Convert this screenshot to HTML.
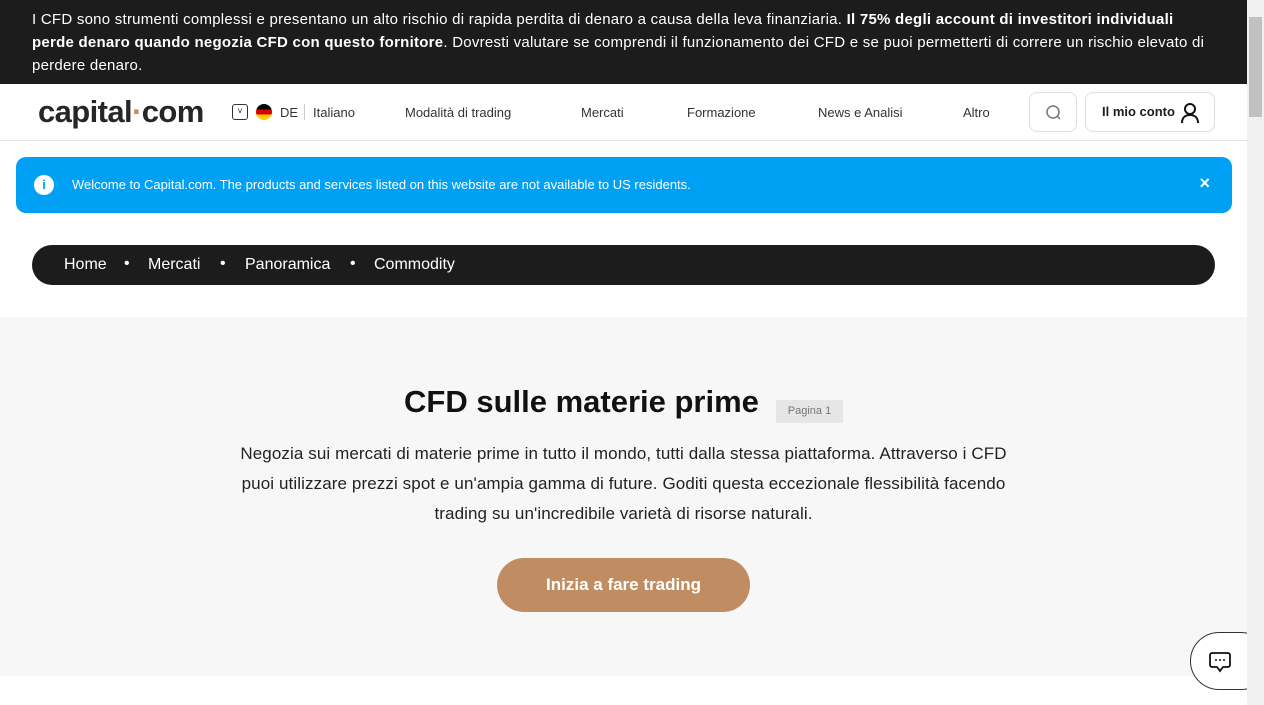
<!DOCTYPE html>
<html><head><meta charset="utf-8"><style>
*{margin:0;padding:0;box-sizing:border-box}
body{width:1264px;height:705px;overflow:hidden;font-family:"Liberation Sans",sans-serif;background:#fff;position:relative;color:#1d1d1d}
.top{position:absolute;left:0;top:0;width:1247px;height:84px;background:#1c1c1c;color:#fff;font-size:15px;line-height:23px;padding:8px 32px 0;letter-spacing:0.25px}
.hdr{position:absolute;left:0;top:84px;width:1247px;height:57px;border-bottom:1px solid #e4e4e4;background:#fff}
.logo{position:absolute;left:38px;top:10px;font-size:31px;font-weight:bold;letter-spacing:-0.6px;color:#262626}
.nav{position:absolute;top:21px;font-size:13px;color:#333}
.sb{position:absolute;right:0;top:0;width:17px;height:705px;background:#f1f1f1}
.thumb{position:absolute;right:2px;top:17px;width:13px;height:100px;background:#c1c1c1}
.info{position:absolute;left:16px;top:157px;width:1216px;height:56px;background:#00a0f5;border-radius:10px;color:#fff;font-size:13px}
.bc{position:absolute;left:32px;top:245px;width:1183px;height:40px;background:#1c1c1c;border-radius:20px;color:#fff;font-size:16px}
.hero{position:absolute;left:0;top:317px;width:1247px;height:359px;background:#f7f7f7;text-align:center}
</style></head><body>
<div class="top">I CFD sono strumenti complessi e presentano un alto rischio di rapida perdita di denaro a causa della leva finanziaria. <b>Il 75% degli account di investitori individuali perde denaro quando negozia CFD con questo fornitore</b>. Dovresti valutare se comprendi il funzionamento dei CFD e se puoi permetterti di correre un rischio elevato di perdere denaro.</div>
<div class="hdr">
<div class="logo">capital<span style="color:#c08d63">·</span>com</div>
<div style="position:absolute;left:232px;top:20px;width:16px;height:16px;border:1px solid #333;border-radius:3px;font-size:9px;text-align:center;line-height:13px">˅</div>
<div style="position:absolute;left:256px;top:20px;width:16px;height:16px;border-radius:50%;background:linear-gradient(#000 33%,#d00 33%,#d00 66%,#fc0 66%)"></div>
<div class="nav" style="left:280px">DE</div>
<div style="position:absolute;left:304px;top:20px;width:1px;height:16px;background:#ccc"></div>
<div class="nav" style="left:313px">Italiano</div>
<div class="nav" style="left:405px">Modalità di trading</div>
<div class="nav" style="left:581px">Mercati</div>
<div class="nav" style="left:687px">Formazione</div>
<div class="nav" style="left:818px">News e Analisi</div>
<div class="nav" style="left:963px">Altro</div>
<div style="position:absolute;left:1029px;top:8px;width:48px;height:40px;border:1px solid #ddd;border-radius:8px"><svg width="48" height="40"><circle cx="23" cy="19" r="6" fill="none" stroke="#777" stroke-width="1.5"/><path d="M27 23l3 3" stroke="#777" stroke-width="1.5"/></svg></div>
<div style="position:absolute;left:1085px;top:8px;width:130px;height:40px;border:1px solid #ddd;border-radius:8px;font-size:13px;font-weight:bold;line-height:38px;padding-left:16px">Il mio conto<svg style="position:absolute;right:14px;top:9px" width="20" height="22"><circle cx="10" cy="7" r="5" fill="none" stroke="#111" stroke-width="2"/><path d="M2 21c0-6 4-8 8-8s8 2 8 8" fill="none" stroke="#111" stroke-width="2"/></svg></div>
</div>
<div class="info"><div style="position:absolute;left:18px;top:18px;width:20px;height:20px;border-radius:50%;background:#fff;color:#00a0f5;font-weight:bold;font-size:13px;text-align:center;line-height:20px">i</div><div style="position:absolute;left:56px;top:20px">Welcome to Capital.com. The products and services listed on this website are not available to US residents.</div><div style="position:absolute;right:22px;top:16px;font-size:18px;font-weight:bold">×</div></div>
<div class="bc"><span style="position:absolute;left:32px;top:11px">Home</span><span style="position:absolute;left:92px;top:10px">•</span><span style="position:absolute;left:116px;top:11px">Mercati</span><span style="position:absolute;left:188px;top:10px">•</span><span style="position:absolute;left:213px;top:11px">Panoramica</span><span style="position:absolute;left:318px;top:10px">•</span><span style="position:absolute;left:342px;top:11px">Commodity</span></div>
<div class="hero">
<div style="position:absolute;left:404px;top:67px;font-size:31px;font-weight:bold;color:#111">CFD sulle materie prime</div>
<div style="position:absolute;left:776px;top:83px;width:67px;height:23px;background:#e6e6e6;font-size:11px;color:#777;line-height:23px">Pagina 1</div>
<div style="position:absolute;left:150px;top:122px;width:947px;font-size:17px;line-height:30px;color:#222;letter-spacing:0.1px;white-space:nowrap">Negozia sui mercati di materie prime in tutto il mondo, tutti dalla stessa piattaforma. Attraverso i CFD<br>puoi utilizzare prezzi spot e un'ampia gamma di future. Goditi questa eccezionale flessibilità facendo<br>trading su un'incredibile varietà di risorse naturali.</div>
<div style="position:absolute;left:497px;top:241px;width:253px;height:54px;border-radius:27px;background:#c08d63;color:#fff;font-size:17px;font-weight:bold;line-height:54px">Inizia a fare trading</div>
</div>
<div style="position:absolute;left:1190px;top:632px;width:80px;height:58px;border:1px solid #333;border-radius:29px;background:#fff"><svg style="position:absolute;left:17px;top:17px" width="24" height="24"><path d="M4 3h16a2 2 0 0 1 2 2v10a2 2 0 0 1-2 2h-5l-3 4-3-4H4a2 2 0 0 1-2-2V5a2 2 0 0 1 2-2z" fill="none" stroke="#111" stroke-width="1.8"/><circle cx="8" cy="10" r="1" fill="#111"/><circle cx="12" cy="10" r="1" fill="#111"/><circle cx="16" cy="10" r="1" fill="#111"/></svg></div>
<div class="sb"><div class="thumb"></div></div>
</body></html>
